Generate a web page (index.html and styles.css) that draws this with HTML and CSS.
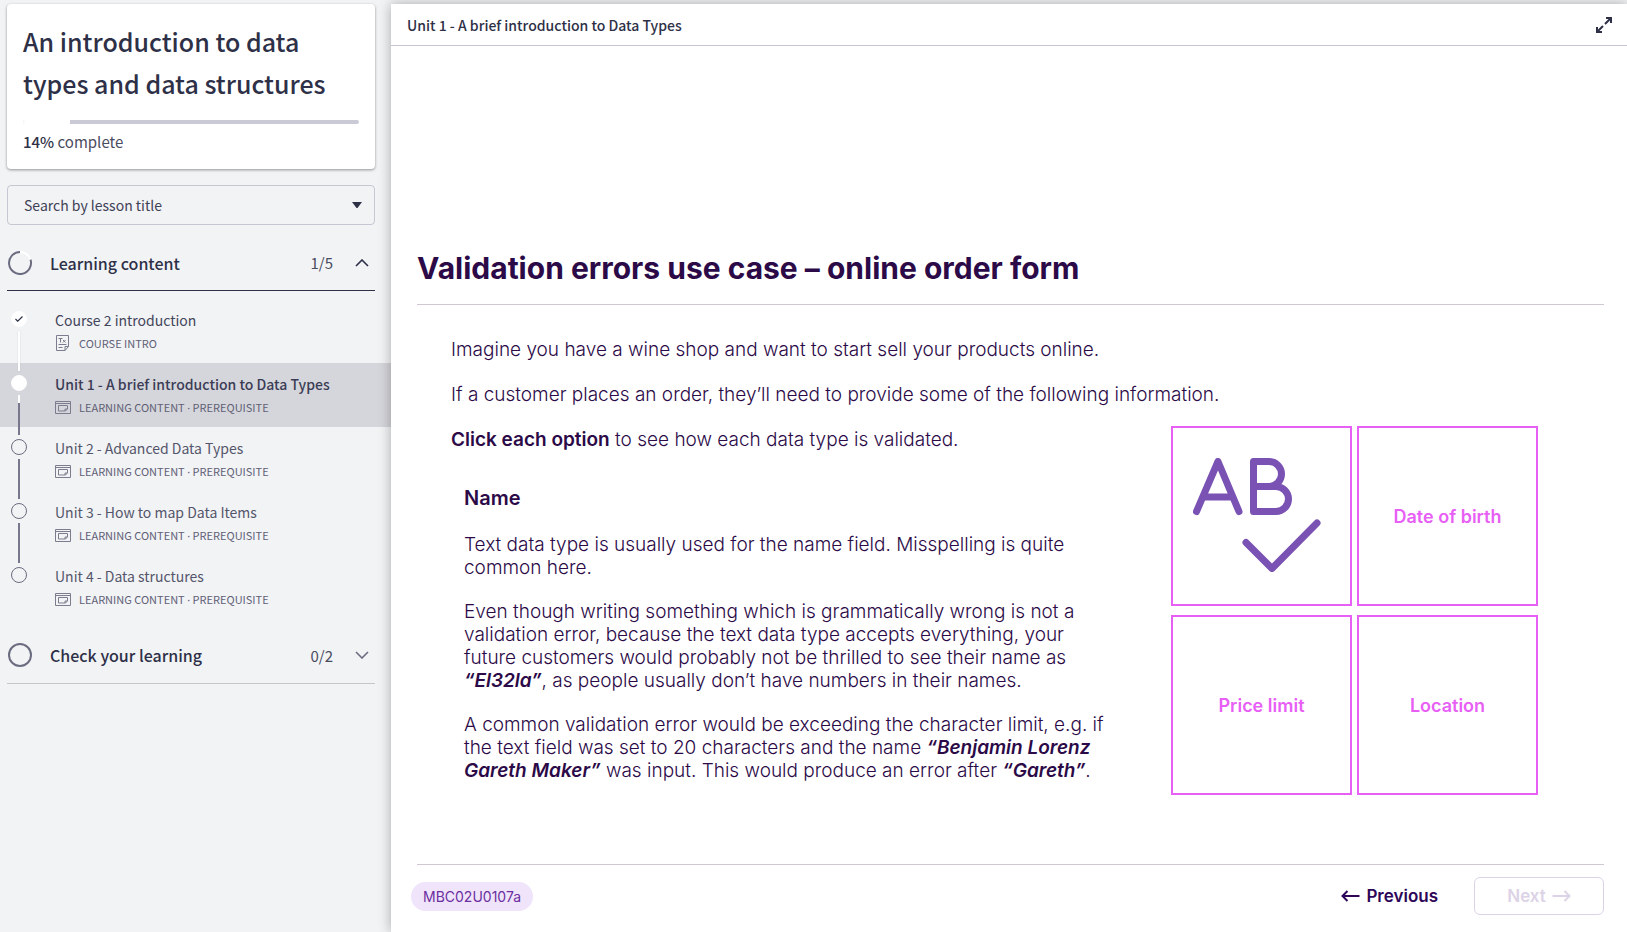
FILE: index.html
```
<!DOCTYPE html>
<html lang="en">
<head>
<meta charset="utf-8">
<meta name="viewport" content="width=device-width, initial-scale=1">
<title>An introduction to data types and data structures</title>
<link rel="stylesheet" href="styles.css">
</head>
<body>
<svg class="sprite" aria-hidden="true">
  <symbol id="icon-slide" viewBox="0 0 16 13">
    <path d="M.5.5h15v12H.5zM.5 2.500h15M3.500 4.500h9v3.500l-2 2h-7zM12 8h-2v2" fill="none" stroke="currentColor"/>
  </symbol>
</svg>
<div class="layout">
  <aside class="sidebar">
    <section class="course-card">
      <h1 class="course-title">An introduction to data types and data structures</h1>
      <progress class="progress" id="progress" value="14" max="100"></progress>
      <label class="progress-label" for="progress"><strong>14%</strong> complete</label>
    </section>

    <div class="search">
      <select class="search-select" aria-label="Search by lesson title">
        <option>Search by lesson title</option>
      </select>
      <svg class="search-caret" viewBox="0 0 10 6" aria-hidden="true"><path d="M0 0h10L5.500 6h-1z" fill="currentColor"/></svg>
    </div>

    <button class="section-head section-open" type="button" aria-expanded="true">
      <svg class="ring" viewBox="0 0 24 24" aria-hidden="true">
        <circle cx="12" cy="12" r="11" fill="none" stroke="#fff" stroke-width="2"/>
        <path d="M22.500 8.600A11 11 0 1 1 12 1" fill="none" stroke="#6b6c80" stroke-width="2"/>
      </svg>
      <span class="section-name">Learning content</span>
      <span class="section-count">1/5</span>
      <svg class="chevron" viewBox="0 0 14 8" aria-hidden="true"><path d="M1 7l6-6 6 6" fill="none" stroke="currentColor" stroke-width="1.600"/></svg>
    </button>

    <ol class="lessons">
      <li class="lesson done">
        <span class="marker">
          <span class="dot"><svg class="tick" viewBox="0 0 8 6" aria-hidden="true"><path d="M.5 3l2.200 2.200L7.500.5" fill="none" stroke="#2e3047" stroke-width="1.200"/></svg></span>
          <span class="rail"></span>
        </span>
        <span class="lesson-body">
          <a class="lesson-link" href="#intro">Course 2 introduction</a>
          <span class="meta">
            <svg class="meta-icon" viewBox="0 0 16 16" aria-hidden="true">
              <path d="M1.500.5h12v11l-3.500 4H1.500zM13.500 11.500h-3.500v4M3.500 3.500h4M5.500 3.500v4M8 5l2.500 2.500M10.500 5L8 7.500M3.500 9.500h8M3.500 12.500h4" fill="none" stroke="currentColor"/>
            </svg>
            <span>COURSE INTRO</span>
          </span>
        </span>
      </li>
      <li class="lesson current">
        <span class="marker"><span class="dot"></span><span class="rail"></span></span>
        <span class="lesson-body">
          <a class="lesson-link" href="#unit1" aria-current="page">Unit 1 - A brief introduction to Data Types</a>
          <span class="meta"><svg class="meta-icon" aria-hidden="true"><use href="#icon-slide" y="1" height="13"/></svg><span>LEARNING CONTENT <span class="separator">·</span> PREREQUISITE</span></span>
        </span>
      </li>
      <li class="lesson">
        <span class="marker"><span class="dot"></span><span class="rail"></span></span>
        <span class="lesson-body">
          <a class="lesson-link" href="#unit2">Unit 2 - Advanced Data Types</a>
          <span class="meta"><svg class="meta-icon" aria-hidden="true"><use href="#icon-slide" y="1" height="13"/></svg><span>LEARNING CONTENT <span class="separator">·</span> PREREQUISITE</span></span>
        </span>
      </li>
      <li class="lesson">
        <span class="marker"><span class="dot"></span><span class="rail"></span></span>
        <span class="lesson-body">
          <a class="lesson-link" href="#unit3">Unit 3 - How to map Data Items</a>
          <span class="meta"><svg class="meta-icon" aria-hidden="true"><use href="#icon-slide" y="1" height="13"/></svg><span>LEARNING CONTENT <span class="separator">·</span> PREREQUISITE</span></span>
        </span>
      </li>
      <li class="lesson">
        <span class="marker"><span class="dot"></span></span>
        <span class="lesson-body">
          <a class="lesson-link" href="#unit4">Unit 4 - Data structures</a>
          <span class="meta"><svg class="meta-icon" aria-hidden="true"><use href="#icon-slide" y="1" height="13"/></svg><span>LEARNING CONTENT <span class="separator">·</span> PREREQUISITE</span></span>
        </span>
      </li>
    </ol>

    <button class="section-head" type="button" aria-expanded="false">
      <svg class="ring" viewBox="0 0 24 24" aria-hidden="true"><circle cx="12" cy="12" r="11" fill="none" stroke="#6b6c80" stroke-width="2"/></svg>
      <span class="section-name">Check your learning</span>
      <span class="section-count">0/2</span>
      <svg class="chevron" viewBox="0 0 14 8" aria-hidden="true"><path d="M1 1l6 6 6-6" fill="none" stroke="#6b6c80" stroke-width="1.600"/></svg>
    </button>
  </aside>

  <main class="viewer">
    <header class="viewer-head">
      <span class="viewer-title">Unit 1 - A brief introduction to Data Types</span>
      <button class="expand" type="button" aria-label="Full screen">
        <svg viewBox="0 0 16 16" aria-hidden="true"><path d="M10 1h5v5M15 1L9 7M6 15H1v-5M1 15l6-6" fill="none" stroke="currentColor" stroke-width="2"/></svg>
      </button>
    </header>

    <article class="slide">
      <h2 class="slide-title">Validation errors use case – online order form</h2>
      <div class="slide-body">
        <p>Imagine you have a wine shop and want to start sell your products online.</p>
        <p>If a customer places an order, they’ll need to provide some of the following information.</p>
        <div class="columns">
          <div class="copy">
            <p><strong>Click each option</strong> to see how each data type is validated.</p>
            <section class="detail">
              <h3 class="detail-title">Name</h3>
              <p>Text data type is usually used for the name field. Misspelling is quite common here.</p>
              <p>Even though writing something which is grammatically wrong is not a validation error, because the text data type accepts everything, your future customers would probably not be thrilled to see their name as <em>“El32la”</em>, as people usually don’t have numbers in their names.</p>
              <p>A common validation error would be exceeding the character limit, e.g. if the text field was set to 20 characters and the name <em>“Benjamin Lorenz Gareth Maker”</em> was input. This would produce an error after <em>“Gareth”</em>.</p>
            </section>
          </div>
          <div class="tiles">
            <button class="tile tile-icon" type="button" aria-label="Name">
              <svg class="spell-icon" viewBox="0 0 128 114" aria-hidden="true">
                <g fill="none" stroke="#7952b3" stroke-width="7" stroke-linecap="round" stroke-linejoin="round">
                  <path d="M3.500 53.500L25 3.500l21 50M11 39h28"/>
                  <path d="M60.500 3.500h15.500a12.500 12.500 0 0 1 0 25h-15.500zM60.500 28.500h22.500a12.500 12.500 0 0 1 0 25H60.500z"/>
                  <path d="M53 84.500l26 26 45-45.500"/>
                </g>
              </svg>
            </button>
            <button class="tile" type="button">Date of birth</button>
            <button class="tile" type="button">Price limit</button>
            <button class="tile" type="button">Location</button>
          </div>
        </div>
      </div>
      <footer class="slide-foot">
        <span class="code">MBC02U0107a</span>
        <nav class="nav">
          <button class="nav-button previous" type="button">
            <svg class="arrow" viewBox="0 0 19 12" aria-hidden="true"><path d="M18.500 6H1.500M6.500 1l-5 5 5 5" fill="none" stroke="currentColor" stroke-width="2"/></svg>
            Previous
          </button>
          <button class="nav-button next" type="button" disabled>
            Next
            <svg class="arrow" viewBox="0 0 19 12" aria-hidden="true"><path d="M.5 6h17M12.500 1l5 5-5 5" fill="none" stroke="currentColor" stroke-width="2"/></svg>
          </button>
        </nav>
      </footer>
    </article>
  </main>
</div>
</body>
</html>
```

FILE: styles.css
```
* { box-sizing: border-box; }

body {
  margin: 0;
  background: #f1f3f5;
  color: #2e3047;
  font-family: "Noto Sans CJK SC", "Noto Sans", sans-serif;
  font-size: 14px;
}

h1, h2, h3, p, ol { margin: 0; padding: 0; }

button, select { font: inherit; color: inherit; }
button { padding: 0; border: 0; background: none; cursor: pointer; }

.sprite { display: none; }

.layout {
  display: grid;
  grid-template-columns: 391px minmax(0, 1fr);
  min-height: 100vh;
  padding-top: 4px;
}

/* Sidebar */
.sidebar { display: flex; flex-direction: column; }

.course-card {
  display: flex;
  flex-direction: column;
  margin: 0 16px 16px 7px;
  padding: 16px 16px 17px;
  border-radius: 4px;
  background: #fff;
  box-shadow: 0 1px 3px rgba(0, 0, 0, .4);
}

.course-title { font-size: 25px; font-weight: 500; line-height: 42px; }

.progress {
  appearance: none;
  width: 100%;
  height: 4px;
  margin: 16px 0 8px;
  border: 0;
  border-radius: 2px;
  overflow: hidden;
}
.progress::-webkit-progress-bar { background: #c9cad5; }
.progress::-webkit-progress-value { background: #fff; }

.progress-label { color: #4a4c60; font-size: 15px; line-height: 20px; }
.progress-label strong { color: #2e3047; font-weight: 500; }

.search { position: relative; margin: 0 16px 0 7px; }

.search-select {
  appearance: none;
  width: 100%;
  height: 40px;
  padding: 0 16px;
  border: 1px solid #c5c7d2;
  border-radius: 4px;
  background: transparent;
  color: #3f4156;
}

.search-caret { position: absolute; top: 17px; right: 13px; width: 10px; height: 6px; pointer-events: none; }

.section-head {
  display: flex;
  align-items: center;
  height: 57px;
  margin: 0 16px 0 7px;
  border-bottom: 1px solid #c5c7cb;
  text-align: left;
}
.section-open { height: 56px; margin-top: 10px; margin-bottom: 8px; border-color: #2e3047; }
.ring { width: 26px; height: 24px; }
.section-name { flex: 1; margin-left: 17px; font-size: 16px; font-weight: 500; }
.section-count { color: #4a4c60; font-size: 15px; }
.chevron { width: 14px; height: 8px; margin: 0 6px 0 22px; }

.lessons { margin-bottom: 8px; list-style: none; }

.lesson { display: flex; height: 64px; padding-left: 11px; }
.current { background: #d5d6db; }

.marker {
  position: relative;
  z-index: 1;
  display: flex;
  flex-direction: column;
  align-items: center;
  gap: 4px;
  width: 16px;
  height: 72px;
  padding-top: 12px;
}

.dot {
  display: flex;
  align-items: center;
  justify-content: center;
  width: 16px;
  height: 16px;
  border: 1px solid #6b6c80;
  border-radius: 50%;
}
.done .dot, .current .dot { border-color: #fff; background: #fff; }
.tick { width: 8px; height: 6px; }

.rail { flex: 1; width: 2px; background: #77788c; }
.done .rail { background: #fff; box-shadow: 0 0 1px #9a9ba6; }
.current .rail { background: linear-gradient(#fff 8px, #77788c 8px); }

.lesson-body { display: flex; flex-direction: column; gap: 2px; margin-left: 28px; padding-top: 10px; }
.lesson-link { color: #55566b; line-height: 22px; text-decoration: none; }
.done .lesson-link { color: #43455a; }
.current .lesson-link { color: #3b3c56; font-weight: 500; }

.meta { display: flex; align-items: center; gap: 8px; color: #5f6075; font-size: 11px; line-height: 20px; }
.meta-icon { width: 16px; height: 16px; color: #7b7c8e; }
.separator { font-family: "Noto Sans", sans-serif; }

/* Viewer */
.viewer {
  display: flex;
  flex-direction: column;
  background: #fff;
  box-shadow: 0 0 12px rgba(0, 0, 0, .3);
}

.viewer-head {
  display: flex;
  align-items: center;
  justify-content: space-between;
  height: 42px;
  padding: 0 15px 0 16px;
  border-bottom: 1px solid #c5c7d2;
}
.viewer-title { font-weight: 500; }
.expand { display: flex; width: 16px; height: 16px; }

.slide {
  flex: 1;
  display: flex;
  flex-direction: column;
  justify-content: flex-end;
  padding: 0 23px 17px 26px;
  color: #2b0a47;
  font-family: Inter, "Open Sans", sans-serif;
  font-size: 19px;
  font-weight: 300;
  line-height: 23px;
}
.slide strong { font-weight: 600; }
.slide em { font-weight: 600; }

.slide-title {
  padding-bottom: 16px;
  border-bottom: 1px solid #cfc8d2;
  font-size: 30px;
  font-weight: 700;
  line-height: 40px;
}

.slide-body { display: flex; flex-direction: column; gap: 22px; padding: 33px 66px 0 34px; }

.columns { display: flex; justify-content: space-between; margin-top: -2px; }
.copy { padding-top: 2px; }

.detail { display: flex; flex-direction: column; gap: 21px; max-width: 660px; padding: 34px 0 0 13px; }
.detail-title { font-size: 20px; font-weight: 600; line-height: 27px; }

.tiles {
  display: grid;
  grid-template-columns: 181px 181px;
  grid-auto-rows: 180px;
  align-content: start;
  gap: 9px 5px;
  flex: none;
}
.tile { border: 2px solid #e85ff5; color: #e85ff5; font-size: 18px; font-weight: 600; }
.tile-icon { display: flex; align-items: flex-start; padding: 30px 0 0 20px; }
.spell-icon { width: 128px; height: 114px; }

.slide-foot {
  display: flex;
  align-items: center;
  justify-content: space-between;
  margin-top: 69px;
  padding-top: 12px;
  border-top: 1px solid #cfc8d2;
}

.code {
  margin-left: -6px;
  padding: 0 12px;
  border-radius: 15px;
  background: #f0e4fb;
  color: #6b2fa0;
  font-size: 14px;
  font-weight: 400;
  line-height: 29px;
}

.nav { display: flex; align-items: center; gap: 36px; }
.nav-button { display: flex; align-items: center; gap: 6px; height: 38px; font-size: 17px; font-weight: 600; }
.previous { color: #2d0657; }
.next { justify-content: center; width: 130px; border: 1px solid #dcd3e6; border-radius: 6px; color: #dcd3e6; }
.arrow { width: 19px; height: 12px; }
```
